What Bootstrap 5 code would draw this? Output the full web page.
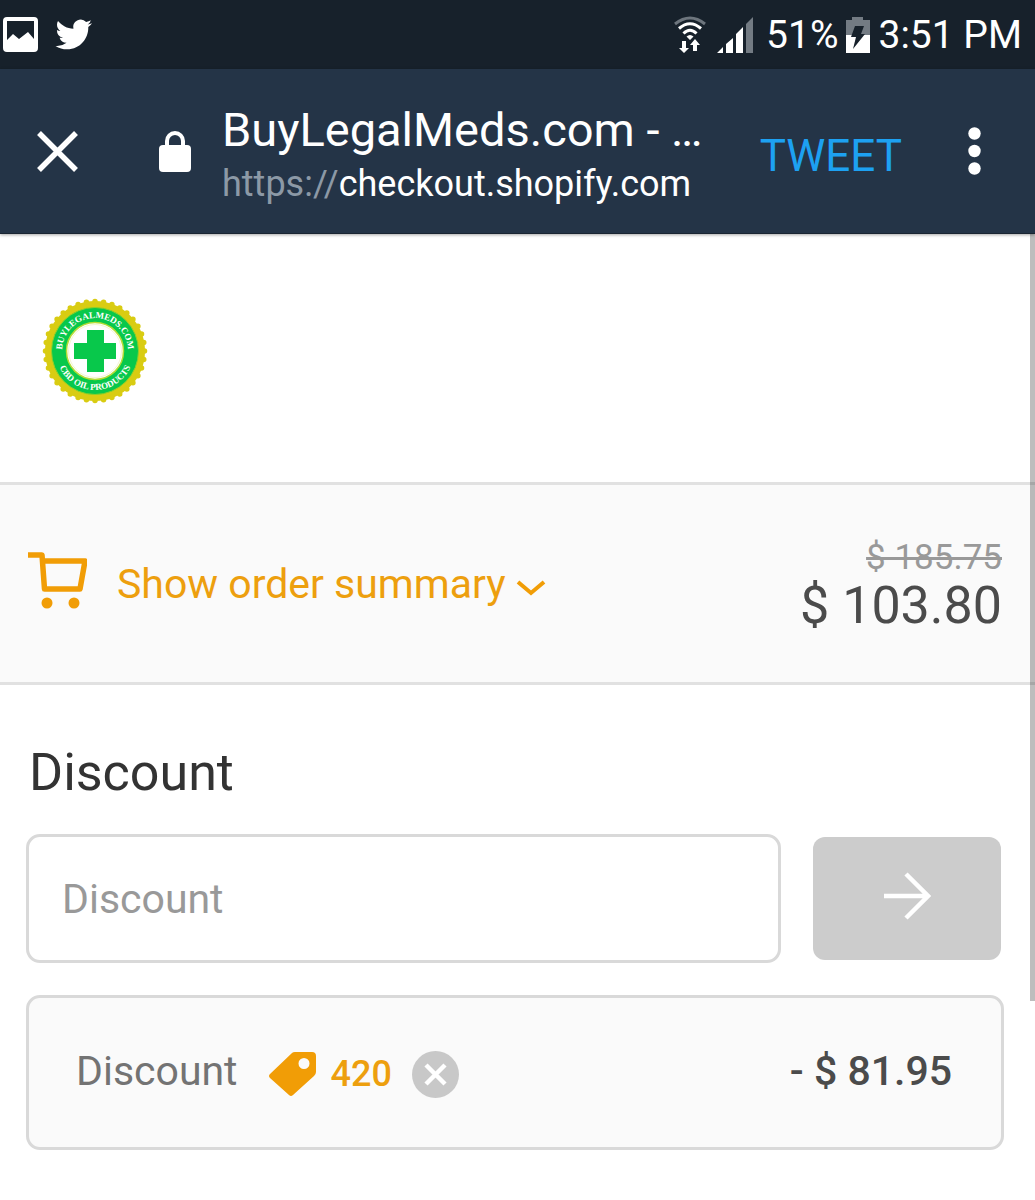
<!DOCTYPE html>
<html lang="en">
<head>
<meta charset="utf-8">
<meta name="viewport" content="width=device-width, initial-scale=1">
<title>BuyLegalMeds.com - Checkout</title>
<link href="https://cdn.jsdelivr.net/npm/bootstrap@5.3.0/dist/css/bootstrap.min.css" rel="stylesheet">
<style>
  body { font-family: Roboto, "Liberation Sans", sans-serif; color: #4b4b4b; background: #fff; }
  svg { display: block; flex: none; }
  .status-bar { height: 69px; background: #17212b; color: #fff; font-size: 39px; line-height: 48px; padding: 0 13px 0 3px; }
  .signal-icon { margin: 0 12px 0 8px; }
  .app-bar { height: 165px; background: #243447; color: #fff; padding: 0 54px 0 37px; border-bottom: 1px solid #1a2532; box-shadow: 0 1px 3px rgba(0,0,0,.35); }
  .plain-btn { background: none; border: 0; padding: 0; color: inherit; }
  .lock-icon { margin: 0 31px 0 81px; }
  .page-info { padding-top: 6px; }
  .page-title { font-size: 47px; line-height: 56px; font-weight: 400; }
  .page-url { font-size: 36px; line-height: 44px; margin-top: 4px; }
  .url-scheme { color: #8c99a6; }
  .tweet-btn { font-size: 44px; line-height: 52px; color: #1da1f2; margin: 10px 66px 0 0; }
  .checkout { position: relative; }
  .scroll-thumb { position: absolute; top: 0; right: 0; width: 5px; height: 767px; background: rgba(0,0,0,.26); }
  .shop-header { height: 248px; padding: 50px 28px; }
  .summary-bar { height: 203px; background: #fafafa; border: solid #e1e1e1; border-width: 3px 0; padding: 0 33px 0 28px; }
  .summary-toggle { font-size: 41px; line-height: 48px; color: #ed9f0e; text-decoration: none; gap: 10px; }
  .cart-icon { margin: 0 20px 6px 0; }
  .old-price { font-size: 35px; line-height: 44px; color: #999; text-decoration: line-through; text-decoration-thickness: 3px; }
  .total-price { font-size: 52px; line-height: 52px; }
  .discount-area { padding: 56px 31px 48px 26px; }
  .discount-title { font-size: 52px; line-height: 64px; font-weight: 400; color: #333; margin: 0 3px 29px; }
  .discount-input { height: 129px; border: 3px solid #d9d9d9; border-radius: 14px; font-size: 41px; padding: 0 33px; color: #333; }
  .discount-input::placeholder { color: #999; opacity: 1; }
  .apply-btn { width: 188px; height: 123px; border-radius: 12px; background: #ccc; margin: 3px 3px 3px 32px; padding-bottom: 6px; }
  .applied-row { height: 155px; margin-top: 32px; border: 3px solid #d9d9d9; border-radius: 14px; background: #fafafa; font-size: 41px; line-height: 48px; padding: 0 49px 4px 47px; }
  .applied-label { color: #737373; }
  .applied-code { margin-left: 31px; padding-top: 7px; }
  .code-text { font-size: 36px; line-height: 48px; font-weight: 500; color: #ed9f0e; margin: 0 20px 0 14px; }
  .seal-text { font: bold 9px "Liberation Serif", serif; fill: #fff; }
</style>
</head>
<body>
<div class="status-bar d-flex align-items-center">
  <svg width="35" height="35" viewBox="0 0 35 35"><path fill="#fff" fill-rule="evenodd" d="M4 0h27a4 4 0 0 1 4 4v27a4 4 0 0 1-4 4H4a4 4 0 0 1-4-4V4a4 4 0 0 1 4-4zM4 4v19l6-6 6 5 9-7 6 7V4z"/></svg>
  <svg class="ms-3" width="38" height="37" viewBox="-1 0 25 24"><path fill="#fff" d="M23.953 4.57a10 10 0 01-2.825.775 4.958 4.958 0 002.163-2.723c-.951.555-2.005.959-3.127 1.184a4.92 4.92 0 00-8.384 4.482C7.69 8.095 4.067 6.13 1.64 3.162a4.822 4.822 0 00-.666 2.475c0 1.71.87 3.213 2.188 4.096a4.904 4.904 0 01-2.228-.616v.06a4.923 4.923 0 003.946 4.827 4.996 4.996 0 01-2.212.085 4.936 4.936 0 004.604 3.417 9.867 9.867 0 01-6.102 2.105c-.39 0-.779-.023-1.17-.067a13.995 13.995 0 007.557 2.209c9.053 0 13.998-7.496 13.998-13.985 0-.21 0-.42-.015-.63A9.935 9.935 0 0024 4.59z"/></svg>
  <div class="ms-auto d-flex align-items-center">
    <svg width="32" height="37" viewBox="0 0 32 37"><g fill="none" stroke-width="3"><path stroke="#6d757d" d="M1 8Q16-4 31 8"/><path stroke="#fff" d="M5 12.500Q16 3 27 12.500M9.500 17.500Q16 11 22.500 17.500"/></g><path fill="#fff" d="M12.500 20.500Q16 17.500 19.500 20.500L16 24zM8 25h4v7h3l-5 5-5-5h3zM19 35v-6h-3l5-6 5 6h-3v6z"/></svg>
    <svg class="signal-icon" width="40" height="36" viewBox="-3 0 40 36"><path fill="#fff" d="M0 36l6-6v6zM9 27l7-6v15H9zM19 17l7-7v26h-7z"/><path fill="#737b83" d="M29 7l7-7v36h-7z"/></svg>
    <span>51%</span>
    <svg class="mx-2" width="24" height="36" viewBox="0 0 24 36"><path fill="#737b83" d="M0 3h6V0h11v3h7v16H0z"/><path fill="#fff" d="M0 18h24v18H0z"/><path fill="#17212b" d="M9 9h9l-3 8h4L7 32l3-12H5z"/></svg>
    <span>3:51 PM</span>
  </div>
</div>
<header class="app-bar d-flex align-items-center">
  <button class="plain-btn" type="button" aria-label="Close"><svg width="41" height="41" viewBox="0 0 41 41"><path d="M2 2l37 37M39 2L2 39" stroke="#fff" stroke-width="5.500"/></svg></button>
  <svg class="lock-icon" width="32" height="41" viewBox="0 0 32 41"><rect y="14" width="32" height="27" rx="4" fill="#fff"/><path d="M8 16v-6a8 8 0 0 1 16 0v6" fill="none" stroke="#fff" stroke-width="4"/></svg>
  <div class="page-info flex-grow-1">
    <h1 class="page-title m-0 text-nowrap">BuyLegalMeds.com - …</h1>
    <div class="page-url text-nowrap"><span class="url-scheme">https://</span>checkout.shopify.com</div>
  </div>
  <button class="plain-btn tweet-btn" type="button">TWEET</button>
  <button class="plain-btn" type="button" aria-label="More options"><svg width="13" height="48" viewBox="0 0 13 48"><g fill="#fff"><circle cx="6.500" cy="6.500" r="6.200"/><circle cx="6.500" cy="24" r="6.200"/><circle cx="6.500" cy="41.500" r="6.200"/></g></svg></button>
</header>
<main class="checkout">
  <div class="scroll-thumb"></div>
  <div class="shop-header">
    <svg width="134" height="134" viewBox="-67 -67 134 134" role="img" aria-label="BuyLegalMeds.com CBD Oil Products">
      <circle r="50" fill="#d9cc12"/>
      <circle r="49.500" fill="none" stroke="#d9cc12" stroke-width="5.500" stroke-linecap="round" pathLength="72" stroke-dasharray="0 2"/>
      <circle r="43.500" fill="#08c84b" stroke="#8ccf2a" stroke-width="1"/>
      <circle r="28.500" fill="#fff" stroke="#b5dc35" stroke-width="1.500"/>
      <circle r="26.500" fill="#fff" stroke="#f3f5cf" stroke-width="1"/>
      <path d="M-8-21H9V-8H21V8H9V21H-8V8H-21V-8H-8z" fill="#08c84b"/>
      <path id="arcTop" d="M0 33A33 33 0 0 1 0-33A33 33 0 0 1 0 33" fill="none"/>
      <path id="arcBottom" d="M0-39A39 39 0 0 0 0 39A39 39 0 0 0 0-39" fill="none"/>
      <text class="seal-text" text-anchor="middle"><textPath href="#arcTop" startOffset="50%">BUYLEGALMEDS.COM</textPath></text>
      <text class="seal-text" text-anchor="middle"><textPath href="#arcBottom" startOffset="50%">CBD OIL PRODUCTS</textPath></text>
    </svg>
  </div>
  <section class="summary-bar d-flex align-items-center justify-content-between">
    <a class="summary-toggle d-flex align-items-center" href="#discount">
      <svg class="cart-icon" width="59" height="57" viewBox="0 0 59 57"><path d="M0 3h14l2.500 34H52l5-28H15" fill="none" stroke="#f19d06" stroke-width="5.500" stroke-linejoin="round"/><circle cx="19" cy="51" r="5.500" fill="#f19d06"/><circle cx="46" cy="51" r="5.500" fill="#f19d06"/></svg>
      <span>Show order summary</span>
      <svg class="mt-2" width="30" height="19" viewBox="0 0 30 19"><path d="M2 4l13 11L28 4" fill="none" stroke="#f19d06" stroke-width="4"/></svg>
    </a>
    <div class="text-end">
      <div class="old-price">$ 185.75</div>
      <div class="total-price">$ 103.80</div>
    </div>
  </section>
  <section class="discount-area" id="discount">
    <h2 class="discount-title"><label for="code">Discount</label></h2>
    <form class="d-flex">
      <input class="discount-input form-control" id="code" type="text" placeholder="Discount">
      <button class="plain-btn apply-btn d-flex flex-shrink-0 align-items-center justify-content-center" type="button" aria-label="Apply discount"><svg width="48" height="48" viewBox="0 0 48 48"><path d="M1 24h44M23 2l22 22-22 22" fill="none" stroke="#fff" stroke-width="4.500"/></svg></button>
    </form>
    <div class="applied-row d-flex align-items-center">
      <span class="applied-label">Discount</span>
      <div class="applied-code d-flex align-items-center">
        <svg width="48" height="45" viewBox="0 0 48 45"><path fill="#f19d06" fill-rule="evenodd" d="M26 0h17a4 4 0 0 1 4 4v16q0 2-2 4L24 43q-2 2-4 0L1 26q-2-2 0-4L23 1q1-1 3-1zM35 6a5.500 5.500 0 1 0 0 11 5.500 5.500 0 0 0 0-11z"/></svg>
        <span class="code-text">420</span>
        <button class="plain-btn" type="button" aria-label="Remove discount"><svg width="47" height="47" viewBox="0 0 47 47"><circle cx="23.500" cy="23.500" r="23.500" fill="#c8c8c8"/><path d="M14 14l19 19M33 14L14 33" stroke="#fff" stroke-width="4.500"/></svg></button>
      </div>
      <span class="ms-auto fw-medium">- $ 81.95</span>
    </div>
  </section>
</main>
<script src="https://cdn.jsdelivr.net/npm/bootstrap@5.3.0/dist/js/bootstrap.bundle.min.js"></script>
</body>
</html>
